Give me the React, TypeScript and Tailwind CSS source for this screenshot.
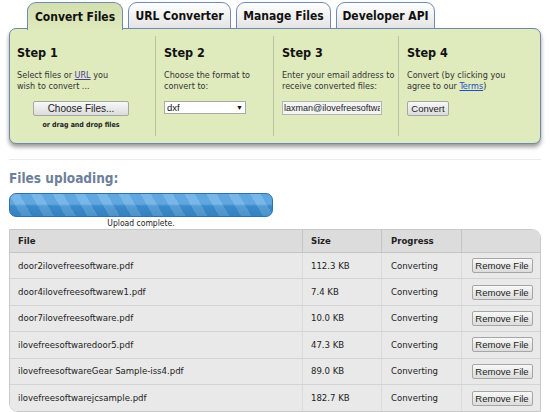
import React from 'react';

const tabs = [
  { label: 'Convert Files', w: 'w-[96px]', active: true },
  { label: 'URL Converter', w: 'w-[103px]', active: false },
  { label: 'Manage Files', w: 'w-[95px]', active: false },
  { label: 'Developer API', w: 'w-[99px]', active: false },
];

const files = [
  { name: 'door2ilovefreesoftware.pdf', size: '112.3 KB' },
  { name: 'door4ilovefreesoftwarew1.pdf', size: '7.4 KB' },
  { name: 'door7ilovefreesoftware.pdf', size: '10.0 KB' },
  { name: 'ilovefreesoftwaredoor5.pdf', size: '47.3 KB' },
  { name: 'ilovefreesoftwareGear Sample-iss4.pdf', size: '89.0 KB' },
  { name: 'ilovefreesoftwarejcsample.pdf', size: '182.7 KB' },
];

const sans = "font-['Tahoma','DejaVu_Sans_Condensed','DejaVu_Sans',sans-serif]";
const arial = "font-['Arial','Liberation_Sans',sans-serif]";

function Btn({ children, className = '' }: { children: React.ReactNode; className?: string }) {
  return (
    <button
      className={`${arial} h-[15px] whitespace-nowrap border border-[#a6a6a6] rounded-[2px] bg-gradient-to-b from-[#f8f8f8] to-[#dcdcdc] leading-[13px] text-[#222] ${className}`}
    >
      {children}
    </button>
  );
}

function Step({ title, children, className = '' }: { title: string; children: React.ReactNode; className?: string }) {
  return (
    <div className={className}>
      <div className="text-[12.5px] font-bold text-[#111] mt-[8px] leading-[18px]">{title}</div>
      {children}
    </div>
  );
}

export default function App() {
  return (
    <div className={`${sans} w-[550px] h-[412px] bg-white overflow-hidden text-[#333]`}>
      {/* tabs */}
      <div className="flex gap-[5px] pl-[27px] pt-[2px] relative z-10">
        {tabs.map((t) => (
          <div
            key={t.label}
            className={`${t.w} h-[27px] flex items-center justify-center rounded-t-[9px] border-[1.5px] border-[#6f8ab5] text-[12px] font-bold text-[#111] ${
              t.active
                ? 'border-b-0 bg-gradient-to-b from-[#d3dfae] to-[#dfeabd] h-[28px] -mb-px'
                : 'bg-gradient-to-b from-white to-[#e4e4e4] mb-[-1px] self-start'
            }`}
          >
            {t.label}
          </div>
        ))}
      </div>

      {/* steps panel */}
      <div className="mx-[9px] -mt-[1px] h-[116px] rounded-[7px] border-[1.5px] border-[#6f88ab] bg-[#dfeabd] shadow-[0_3px_4px_rgba(0,0,0,0.4)] flex py-[7px] text-[9px] leading-[11px]">
        <Step title="Step 1" className="w-[145px] pl-[7px] pr-[10px]">
          <div className="mt-[8px]">
            Select files or <span className="underline text-[#4b3d96]">URL</span> you<br />wish to convert ...
          </div>
          <div className="flex flex-col items-center mt-[9px]">
            <Btn className="w-[96px] text-[10px]">Choose Files...</Btn>
            <div className="text-[7px] font-bold mt-[4px] text-[#222]">or drag and drop files</div>
          </div>
        </Step>
        <Step title="Step 2" className="w-[118px] pl-[8px] border-l border-[#b9c2a6]">
          <div className="mt-[8px]">
            Choose the format to<br />convert to:
          </div>
          <div className={`${arial} mt-[9px] w-[82px] h-[13px] bg-white border border-[#a9a9a9] flex items-center justify-between px-[2px] text-[9.5px] text-[#111]`}>
            <span>dxf</span>
            <span className="text-[7px]">▼</span>
          </div>
        </Step>
        <Step title="Step 3" className="w-[125px] pl-[8px] border-l border-[#b9c2a6]">
          <div className="mt-[8px] whitespace-nowrap">
            Enter your email address to<br />receive converted files:
          </div>
          <input
            readOnly
            value="laxman@ilovefreesoftware.com"
            className={`${arial} block mt-[9px] w-[100px] h-[14px] bg-[#f4f4f4] border border-[#b4b4b4] px-[1px] text-[9px] leading-[12px] text-[#222] outline-none`}
          />
        </Step>
        <Step title="Step 4" className="flex-1 pl-[8px] border-l border-[#b9c2a6]">
          <div className="mt-[8px]">
            Convert (by clicking you<br />agree to our <span className="underline text-[#1f4fc7]">Terms</span>)
          </div>
          <Btn className="mt-[9px] w-[42px] text-[9.5px]">Convert</Btn>
        </Step>
      </div>

      <div className="mx-[9px] mt-[15px] border-t border-[#ececec]" />

      {/* uploading */}
      <div className="px-[9px]">
        <div className="text-[13.5px] font-bold text-[#6d7f9a] mt-[9px] leading-[18px]">Files uploading:</div>
        <div className="w-[264px] mt-[6px]">
          <div className="h-[24px] rounded-[7px] border border-[#2a73b5] bg-[linear-gradient(to_bottom,rgba(255,255,255,0.18)_0%,rgba(255,255,255,0.18)_45%,rgba(0,0,0,0.06)_55%,rgba(0,0,0,0.12)_100%),repeating-linear-gradient(60deg,#3e93d8_0px,#3e93d8_10px,#5aa7e3_10px,#5aa7e3_19px)]" />
          <div className="text-center text-[8.5px] leading-[12px] text-[#222]">Upload complete.</div>
        </div>

        {/* table */}
        <div className="border border-[#c9c9c9] rounded-tr-[9px] rounded-bl-[9px] overflow-hidden text-[9.5px] text-[#222]">
          <div className="flex h-[23px] bg-[#dcdcdc] font-bold border-b border-[#c4c4c4]">
            <div className="w-[292px] pl-[8px] flex items-center">File</div>
            <div className="w-[79px] pl-[8px] flex items-center border-l border-[#c4c4c4]">Size</div>
            <div className="w-[80px] pl-[9px] flex items-center border-l border-[#c4c4c4]">Progress</div>
            <div className="flex-1 border-l border-[#c4c4c4]" />
          </div>
          {files.map((f) => (
            <div key={f.name} className="flex h-[26.4px] bg-[#e9e9e9] border-b border-[#d3d3d3] last:border-b-0">
              <div className="w-[292px] pl-[8px] flex items-center">{f.name}</div>
              <div className="w-[79px] pl-[8px] flex items-center border-l border-[#dadada]">{f.size}</div>
              <div className="w-[80px] pl-[9px] flex items-center border-l border-[#dadada]">Converting</div>
              <div className="flex-1 flex items-center justify-center border-l border-[#dadada] pl-[2px]">
                <Btn className="w-[61px] text-[9.5px]">Remove File</Btn>
              </div>
            </div>
          ))}
        </div>
      </div>
    </div>
  );
}
